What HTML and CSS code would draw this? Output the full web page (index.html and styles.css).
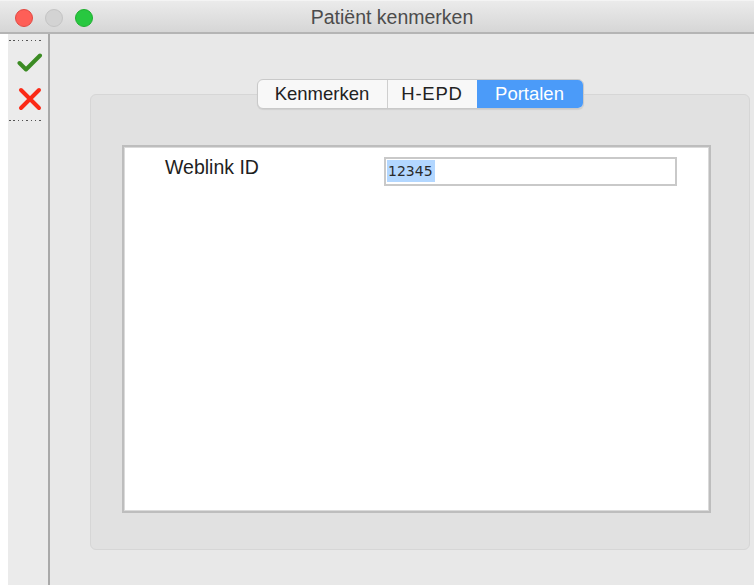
FILE: index.html
```html
<!DOCTYPE html>
<html lang="nl">
<head>
<meta charset="utf-8">
<title>Patiënt kenmerken</title>
<link rel="stylesheet" href="styles.css">
</head>
<body>
<div class="window">
  <header class="titlebar">
    <div class="lights">
      <span class="light red"></span>
      <span class="light gray"></span>
      <span class="light green"></span>
    </div>
    <div class="title">Patiënt kenmerken</div>
  </header>
  <div class="content">
    <aside class="toolbar">
      <div class="dots"></div>
      <button class="tool" title="OK">
        <svg width="26" height="22" viewBox="0 0 26 22"><path d="M2.5 11 L9 17.5 L23 3.5" fill="none" stroke="#3b8b23" stroke-width="4" stroke-linecap="round" stroke-linejoin="round"/></svg>
      </button>
      <button class="tool" title="Annuleren">
        <svg width="26" height="24" viewBox="0 0 26 24"><path d="M4 3 L22 21 M22 3 L4 21" fill="none" stroke="#fb2a17" stroke-width="4" stroke-linecap="round"/></svg>
      </button>
      <div class="dots"></div>
    </aside>
    <main class="main">
      <nav class="tabs">
        <span class="tab">Kenmerken</span>
        <span class="tab">H-EPD</span>
        <span class="tab active">Portalen</span>
      </nav>
      <section class="groupbox">
        <div class="panel">
          <div class="field">
            <label class="label" for="weblink">Weblink ID</label>
            <div class="input" id="weblink"><span class="sel">12345</span></div>
          </div>
        </div>
      </section>
    </main>
  </div>
</div>
</body>
</html>
```
FILE: styles.css
```css
* { box-sizing: border-box; }

html, body {
  margin: 0;
  padding: 0;
  background: #ffffff;
}

body {
  font-family: "Liberation Sans", Arial, sans-serif;
  color: #222;
}

.window {
  width: 754px;
  height: 585px;
  display: flex;
  flex-direction: column;
  overflow: hidden;
}

/* title bar */
.titlebar {
  height: 34px;
  flex: none;
  position: relative;
  display: flex;
  align-items: center;
  justify-content: center;
  background: linear-gradient(#ebebeb, #d6d6d6);
  border-top: 1px solid #f4f4f4;
  border-bottom: 2px solid #b4b4b4;
}

.lights {
  position: absolute;
  left: 15px;
  top: 8px;
  display: flex;
  gap: 12px;
}

.light {
  width: 18px;
  height: 18px;
  border-radius: 50%;
}
.light.red { background: #fe5f57; border: 1px solid #e14942; }
.light.gray { background: #d3d3d3; border: 1px solid #c4c4c4; }
.light.green { background: #28c840; border: 1px solid #1fae30; }

.title {
  font-size: 19.5px;
  color: #4c4c4c;
  margin-left: 30px;
  margin-top: 2px;
}

/* body area */
.content {
  flex: 1;
  display: flex;
  padding-left: 8px;
}

.toolbar {
  width: 42px;
  flex: none;
  background: #ebebeb;
  border-right: 2px solid #a9a9a9;
  display: flex;
  flex-direction: column;
  align-items: center;
  padding-top: 6px;
}

.dots {
  width: 34px;
  height: 1px;
  margin-left: -4px;
  background: repeating-linear-gradient(90deg, #555 0 1.5px, transparent 1.5px 4.3px);
}

.tool {
  border: 0;
  background: none;
  padding: 0;
  margin: 0;
  display: flex;
  align-items: center;
  justify-content: center;
  margin-left: 4px;
}
.tool:first-of-type { margin-top: 11px; }
.tool + .tool { margin-top: 13px; }
.tool + .dots { margin-top: 9px; }

.main {
  flex: 1;
  background: #e8e8e8;
  display: flex;
  flex-direction: column;
  align-items: center;
  padding: 45px 4px 0 40px;
}

/* segmented tabs */
.tabs {
  display: flex;
  height: 30px;
  background: #f8f8f8;
  border: 1px solid #c9c9c9;
  border-radius: 6px;
  overflow: hidden;
  position: relative;
  z-index: 1;
  font-size: 18.5px;
  box-shadow: 0 1px 1px rgba(0,0,0,0.08);
}

.tab {
  display: flex;
  align-items: center;
  justify-content: center;
  color: #222;
}
.tab:nth-child(1) { width: 130px; border-right: 1px solid #cfcfcf; }
.tab:nth-child(2) { width: 89px; letter-spacing: 0.8px; }
.tab.active { width: 106px; background: #4b9bf9; color: #fff; }

.groupbox {
  width: 660px;
  height: 456px;
  margin-top: -15px;
  background: #e1e1e1;
  border: 1px solid #d6d6d6;
  border-radius: 6px;
  padding: 50px 38px 36px 31px;
}

.panel {
  width: 100%;
  height: 100%;
  background: #fff;
  border: 2px solid #bdbdbd;
  box-shadow: inset 0 0 0 1px #dadada;
  padding: 9px 32px 0 41px;
}

.field {
  display: flex;
  align-items: center;
  height: 30px;
}

.label {
  width: 219px;
  font-size: 19.5px;
  color: #1e1e1e;
  margin-top: -7px;
}

.input {
  width: 293px;
  height: 29px;
  border: 2px solid #c9c9c9;
  display: flex;
  align-items: center;
  padding-left: 1px;
  font-family: "DejaVu Sans", sans-serif;
  font-size: 14px;
  color: #2a2a2a;
}

.sel {
  background: #b3d7ff;
  padding: 3px 2px 3px 1px;
  line-height: 16px;
}
```
